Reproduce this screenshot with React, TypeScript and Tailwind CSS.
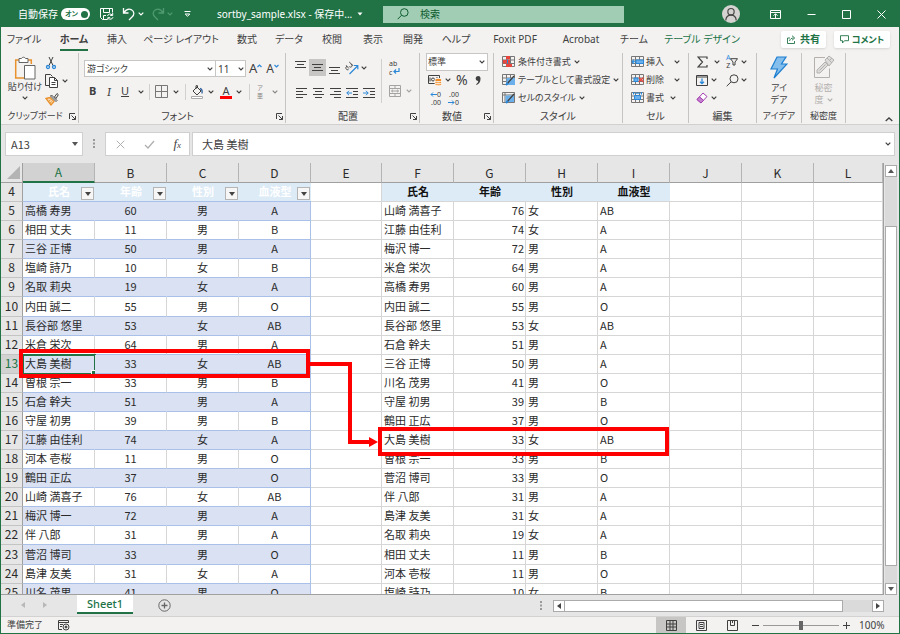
import React from 'react';
import clsx from 'clsx';

type Person = [name: string, age: number, sex: string, blood: string];

const COLUMNS = ['A', 'B', 'C', 'D', 'E', 'F', 'G', 'H', 'I', 'J', 'K', 'L'];
const HEADINGS = ['氏名', '年齢', '性別', '血液型'];

const SOURCE: Person[] = [
  ['高橋 寿男', 60, '男', 'A'],
  ['相田 丈夫', 11, '男', 'B'],
  ['三谷 正博', 50, '男', 'A'],
  ['塩崎 詩乃', 10, '女', 'B'],
  ['名取 莉央', 19, '女', 'A'],
  ['内田 誠二', 55, '男', 'O'],
  ['長谷部 悠里', 53, '女', 'AB'],
  ['米倉 栄次', 64, '男', 'A'],
  ['大島 美樹', 33, '女', 'AB'],
  ['曽根 宗一', 33, '男', 'B'],
  ['石倉 幹夫', 51, '男', 'A'],
  ['守屋 初男', 39, '男', 'B'],
  ['江藤 由佳利', 74, '女', 'A'],
  ['河本 壱桜', 11, '男', 'O'],
  ['鶴田 正広', 37, '男', 'O'],
  ['山崎 満喜子', 76, '女', 'AB'],
  ['梅沢 博一', 72, '男', 'A'],
  ['伴 八郎', 31, '男', 'A'],
  ['菅沼 博司', 33, '男', 'O'],
  ['島津 友美', 31, '女', 'A'],
  ['川名 茂男', 41, '男', 'O'],
];

const SORTED: Person[] = [
  ['山崎 満喜子', 76, '女', 'AB'],
  ['江藤 由佳利', 74, '女', 'A'],
  ['梅沢 博一', 72, '男', 'A'],
  ['米倉 栄次', 64, '男', 'A'],
  ['高橋 寿男', 60, '男', 'A'],
  ['内田 誠二', 55, '男', 'O'],
  ['長谷部 悠里', 53, '女', 'AB'],
  ['石倉 幹夫', 51, '男', 'A'],
  ['三谷 正博', 50, '男', 'A'],
  ['川名 茂男', 41, '男', 'O'],
  ['守屋 初男', 39, '男', 'B'],
  ['鶴田 正広', 37, '男', 'O'],
  ['大島 美樹', 33, '女', 'AB'],
  ['曽根 宗一', 33, '男', 'B'],
  ['菅沼 博司', 33, '男', 'O'],
  ['伴 八郎', 31, '男', 'A'],
  ['島津 友美', 31, '女', 'A'],
  ['名取 莉央', 19, '女', 'A'],
  ['相田 丈夫', 11, '男', 'B'],
  ['河本 壱桜', 11, '男', 'O'],
  ['塩崎 詩乃', 10, '女', 'B'],
];

const TABS = [
  { label: 'ファイル', width: 'w-[42px]' },
  { label: 'ホーム', width: 'w-[58px]', active: true },
  { label: '挿入', width: 'w-[28px]' },
  { label: 'ページ レイアウト', width: 'w-[100px]' },
  { label: '数式', width: 'w-[32px]' },
  { label: 'データ', width: 'w-[52px]' },
  { label: '校閲', width: 'w-[34px]' },
  { label: '表示', width: 'w-[48px]' },
  { label: '開発', width: 'w-[32px]' },
  { label: 'ヘルプ', width: 'w-[54px]' },
  { label: 'Foxit PDF', width: 'w-[64px]' },
  { label: 'Acrobat', width: 'w-[68px]' },
  { label: 'チーム', width: 'w-[38px]' },
  { label: 'テーブル デザイン', width: 'w-[98px]', context: true },
];

interface IconProps {
  children: React.ReactNode;
  className?: string;
  box?: string;
}

const Icon: React.FC<IconProps> = ({ children, className = 'w-[14px] h-[14px]', box = '0 0 14 14' }) => (
  <svg viewBox={box} className={clsx('shrink-0', className)} fill="none" stroke="currentColor" aria-hidden="true">
    {children}
  </svg>
);

const Chevron: React.FC<{ className?: string }> = ({ className }) => (
  <svg viewBox="0 0 6 4" className={clsx('w-[6px] h-[4px] shrink-0', className)} fill="none" stroke="currentColor" strokeWidth="1.2" aria-hidden="true">
    <path d="M.7.7 3 3 5.3.7" />
  </svg>
);

const Tool: React.FC<{ label: string; className?: string; children: React.ReactNode }> = ({ label, className, children }) => (
  <button type="button" aria-label={label} className={clsx('flex shrink-0 items-center whitespace-nowrap', className)}>
    {children}
  </button>
);

const Group: React.FC<{ label: string; width: string; small?: boolean; launcher?: boolean; children: React.ReactNode }> = ({ label, width, small, launcher, children }) => (
  <section aria-label={label} className={clsx('flex h-[70px] shrink-0 flex-col border-r border-[#c6c4c2]', width)}>
    <div className="h-[56px]">{children}</div>
    <div className="flex h-[14px] items-center">
      <span className={clsx('flex-1 whitespace-nowrap text-center leading-[14px]', small ? 'text-[9px]' : 'text-[10px]')}>{label}</span>
      {launcher && (
        <Tool label={`${label}の設定`} className="mr-[2px]">
          <Icon className="h-[7px] w-[7px]" box="0 0 7 7">
            <path d="M.5 6V.5H6M2.5 2.5l4 4M6.5 3v3.5H3" />
          </Icon>
        </Tool>
      )}
    </div>
  </section>
);

/* horizontal strokes of the alignment icons: [x, width] per line */
const Lines: React.FC<{ rows: [number, number][]; gap?: number; top?: number }> = ({ rows, gap = 3, top = 1 }) => (
  <Icon className="h-[12px] w-[12px]" box="0 0 12 12">
    {rows.map(([x, w], i) => (
      <path key={i} d={`M${x} ${top + i * gap + 0.5}h${w}`} />
    ))}
  </Icon>
);

const TitleBar = () => (
  <header className="flex h-[26px] shrink-0 items-center bg-[#217346] text-white">
    <div className="flex w-[382px] shrink-0 items-center">
      <label className="ml-[17px] flex items-center gap-[5px] text-[10px]">
        <span className="w-[38px] whitespace-nowrap">自動保存</span>
        <input type="checkbox" role="switch" defaultChecked className="sr-only" />
        <span className="flex h-[12px] w-[29px] items-center justify-between whitespace-nowrap rounded-full bg-white pl-[4px] pr-[2px] text-[7px] font-bold leading-[12px] text-[#217346]">
          オン
          <span className="h-[7px] w-[7px] shrink-0 rounded-full bg-[#217346]" />
        </span>
      </label>
      <Tool label="上書き保存" className="ml-[10px]">
        <Icon>
          <path d="M7 12.5H2.5l-2-2V1.500h12v4M3.500 1.500v4h6v-4M3.500 12.500v-4h2.500M7.500 9a2.700 2.700 0 0 1 4.700-1M12.700 6v2.500h-2.500M13 10.200a2.700 2.700 0 0 1-4.700 1M7.800 13v-2.300h2.400" />
        </Icon>
      </Tool>
      <Tool label="元に戻す" className="ml-[8px] gap-[2px]">
        <Icon>
          <path strokeWidth="1.300" d="M1.500 1v5h5M1.500 6C4 2.500 7 1.500 9.500 2.800c3 1.700 3 5.200.5 7.200l-3 3" />
        </Icon>
        <Chevron />
      </Tool>
      <Tool label="やり直し" className="ml-[7px] gap-[2px] text-[#4f9a70]">
        <Icon>
          <path strokeWidth="1.300" d="M12.500 1v5h-5M12.500 6C10 2.500 7 1.500 4.500 2.800c-3 1.700-3 5.200-.5 7.200l3 3" />
        </Icon>
        <Chevron />
      </Tool>
      <Tool label="ツール バーのカスタマイズ" className="ml-[11px]">
        <Icon className="h-[6px] w-[7px]" box="0 0 7 6">
          <path d="M.5.5h6M1.200 3h4.600L3.500 5.300z" />
        </Icon>
      </Tool>
      <h1 className="ml-[26px] w-[136px] whitespace-nowrap text-[10px]">sortby_sample.xlsx - 保存中...</h1>
      <Icon className="ml-[4px] h-[4px] w-[6px]" box="0 0 6 4">
        <path d="M.5.5h5L3 3.500z" fill="currentColor" stroke="none" />
      </Icon>
    </div>
    <div className="flex h-[17px] w-[241px] items-center bg-[#a0cdb4] text-[#0e5c2f]">
      <Icon className="ml-[14px] h-[12px] w-[12px]" box="0 0 12 12">
        <circle cx="7.300" cy="4.500" r="3.800" />
        <path d="M4.500 7.300.7 11.200" />
      </Icon>
      <input aria-label="検索" placeholder="検索" className="ml-[11px] w-full bg-transparent text-[10px] outline-none placeholder:text-[#0e5c2f]" />
    </div>
    <div className="ml-auto flex items-center pr-[13px]">
      <Tool label="アカウント" className="mr-[30px] h-[18px] w-[18px] justify-center rounded-full bg-[#d5d3d1] text-[#444]">
        <Icon className="h-[14px] w-[14px]" box="0 0 12 12">
          <circle cx="6" cy="4" r="2.700" />
          <path d="M1.500 11.500C1.700 8.500 3.500 6.900 6 6.900s4.300 1.600 4.500 4.600" />
        </Icon>
      </Tool>
      <Tool label="リボンの表示オプション" className="mr-[26px]">
        <Icon className="h-[9px] w-[11px]" box="0 0 11 9">
          <path d="M.5.500h10v8H.5zM.5 2.500h10M5.500 8V4M3.500 5.700l2-2 2 2" />
        </Icon>
      </Tool>
      <Tool label="最小化" className="mr-[26px]">
        <Icon className="h-[9px] w-[9px]" box="0 0 9 9"><path d="M.5 4.500h8" /></Icon>
      </Tool>
      <Tool label="最大化" className="mr-[26px]">
        <Icon className="h-[9px] w-[9px]" box="0 0 9 9"><path d="M.5.500h8v8h-8z" /></Icon>
      </Tool>
      <Tool label="閉じる">
        <Icon className="h-[9px] w-[9px]" box="0 0 9 9"><path d="m.5.500 8 8m0-8-8 8" /></Icon>
      </Tool>
    </div>
  </header>
);

const TabBar = () => (
  <nav className="flex h-[25px] shrink-0 items-center pl-[2px] text-[10px]">
    {TABS.map((tab) => (
      <button
        key={tab.label}
        type="button"
        className={clsx(
          'flex h-[22px] shrink-0 items-center justify-center whitespace-nowrap',
          tab.width,
          tab.active && 'font-bold',
          tab.context && 'text-[#217346]',
        )}
      >
        <span className={clsx('flex h-[22px] items-center border-y-2 border-transparent', tab.active && 'border-b-[#217346]')}>{tab.label}</span>
      </button>
    ))}
    <div className="ml-auto flex gap-[8px] pr-[9px] font-bold text-[#217346]">
      <button type="button" className="flex h-[17px] w-[45px] items-center justify-center gap-[4px] rounded-xs bg-white shadow-sm">
        <Icon className="h-[9px] w-[9px]" box="0 0 9 9">
          <path strokeWidth=".9" d="M3 3H.5v5.500h7V6M2.500 6C3 4 4.500 3 6.500 3M5 .7 7.700 3 5 5.300" />
        </Icon>
        共有
      </button>
      <button type="button" className="flex h-[17px] w-[56px] items-center justify-center gap-[3px] whitespace-nowrap rounded-xs bg-white text-[9px] shadow-sm">
        <Icon className="h-[9px] w-[9px]" box="0 0 9 9">
          <path strokeWidth=".9" d="M.5.700h8v5h-4L2.500 8V5.700h-2z" />
        </Icon>
        コメント
      </button>
    </div>
  </nav>
);

const ClipboardGroup = () => (
  <Group label="クリップボード" width="w-[78px]" small launcher>
    <div className="flex">
      <Tool label="貼り付け" className="w-[44px] flex-col pl-[4px] pt-[3px] text-[9px] leading-[14px]">
        <Icon className="h-[24px] w-[22px]" box="0 0 22 24">
          <path stroke="#e8912d" strokeWidth="1.500" d="M5 4H1.700v18H10M14 4h3.300v4" />
          <path stroke="#666" fill="#fff" d="M5 6.500v-4h2.500a2.200 2.200 0 0 1 4 0H14v4zM10.500 9.500h10.500v13.500H10.500z" />
        </Icon>
        <span>貼り付け</span>
        <Chevron className="mt-[2px]" />
      </Tool>
      <div className="flex flex-col gap-[4px] pt-[3px]">
        <Tool label="切り取り">
          <Icon>
            <path d="m4 1 4 8.500M8 1 4 9.500" />
            <circle cx="3" cy="11" r="1.500" stroke="#2b88d8" strokeWidth="1.300" />
            <circle cx="9" cy="11" r="1.500" stroke="#2b88d8" strokeWidth="1.300" />
          </Icon>
        </Tool>
        <Tool label="コピー" className="gap-[3px]">
          <Icon>
            <path d="M4.500 11.500h-4V.5h5l2 2" />
            <path fill="#fff" d="M4.500 3.500h5l3 3v7h-8zM9.500 3.500v3h3M6.500 8.500h4M6.500 10.500h4" />
          </Icon>
          <Chevron />
        </Tool>
        <Tool label="書式のコピー">
          <Icon>
            <path fill="#fbd9ae" stroke="#e8912d" strokeWidth="1.300" d="M1 6.500 5 5.500l4 4L6 13z" />
            <path stroke="#e8912d" d="m3.500 9.500 2-1.500M5 11.500l1.500-2" />
            <path fill="#fff" d="M5.500 4 11 9.500l1-1L6.500 3zM9.500 5 12 1.500l1.300 1.200L11 6.500z" />
          </Icon>
        </Tool>
      </div>
    </div>
  </Group>
);

const Divider = ({ className }: { className?: string }) => <span className={clsx('w-px shrink-0 bg-[#d2d0ce]', className)} />;

const FontGroup = () => (
  <Group label="フォント" width="w-[207px]" launcher>
    <div className="flex h-[17px] items-center pl-[5px] mt-[7px]">
      <span className="relative flex items-center">
        <select aria-label="フォント名" className="h-[17px] w-[132px] appearance-none border border-[#c8c6c4] bg-white pl-[2px] text-[9px] leading-[14px]">
          <option>游ゴシック</option>
        </select>
        <Chevron className="absolute right-[3px]" />
      </span>
      <span className="relative -ml-px flex items-center">
        <select aria-label="フォント サイズ" className="h-[17px] w-[31px] appearance-none border border-[#c8c6c4] bg-white pl-[2px] text-[10px] leading-[14px]">
          <option>11</option>
        </select>
        <Chevron className="absolute right-[2px]" />
      </span>
      <Tool label="フォント サイズの拡大" className="ml-[3px] text-[13px]">
        A<Icon className="mb-[6px] h-[4px] w-[5px]" box="0 0 5 4"><path stroke="#2b88d8" strokeWidth="1.200" d="M.5 3 2.500 1l2 2" /></Icon>
      </Tool>
      <Tool label="フォント サイズの縮小" className="ml-[4px] text-[12px]">
        A<Icon className="mb-[6px] h-[4px] w-[5px]" box="0 0 5 4"><path stroke="#2b88d8" strokeWidth="1.200" d="m.5 1 2 2 2-2" /></Icon>
      </Tool>
    </div>
    <div className="mt-[6px] flex h-[17px] items-center pl-[10px]">
      <Tool label="太字" className="w-[17px] text-[11px] font-bold">B</Tool>
      <Tool label="斜体" className="w-[15px] pl-[1px] font-serif text-[12px] italic">I</Tool>
      <Tool label="下線" className="w-[23px] justify-between text-[11px]"><span className="underline">U</span><Chevron /></Tool>
      <Divider className="ml-[5px] h-[16px]" />
      <Tool label="罫線" className="ml-[5px] gap-[5px]">
        <Icon className="h-[13px] w-[13px]" box="0 0 13 13"><path stroke="#777" d="M.5.500h12v12H.5zM6.500 0v13M0 6.500h13" /></Icon>
        <Chevron />
      </Tool>
      <Divider className="ml-[6px] h-[16px]" />
      <Tool label="塗りつぶしの色" className="ml-[5px] gap-[4px]">
        <Icon className="h-[14px] w-[13px]" box="0 0 13 14">
          <path d="m2 6 4-4 4 4-4 4zM5 4V.7h1.500V3" />
          <path stroke="#2b5f9e" strokeWidth="1.300" d="M9 3.500c2 .5 2.500 2 2 5" />
          <path stroke="#aaa" d="M.5 11.500h11v2H.5z" fill="#fff" />
        </Icon>
        <Chevron />
      </Tool>
      <Tool label="フォントの色" className="ml-[6px] gap-[4px]">
        <span className="flex h-[14px] w-[12px] flex-col items-center border-b-[3px] border-[#f00] text-[11px] leading-[12px]">A</span>
        <Chevron />
      </Tool>
      <Divider className="ml-[7px] h-[16px]" />
      <Tool label="ふりがなの表示" className="ml-[7px] gap-[9px] text-[#8a8886]">
        <span className="flex flex-col text-[6px] leading-[8px]"><span>ア</span><span>亜</span></span>
        <Chevron />
      </Tool>
    </div>
  </Group>
);

const AlignGroup = () => (
  <Group label="配置" width="w-[134px]" launcher>
    <div className="flex pt-[6px]">
      <div className="flex w-[87px] flex-col gap-[8px] pl-[7px]">
        <div className="flex h-[17px] items-center">
          <Tool label="上揃え" className="w-[16px] justify-center pb-[3px]"><Lines rows={[[0, 11], [2, 7], [0, 11]]} /></Tool>
          <Tool label="上下中央揃え" className="h-[17px] w-[17px] justify-center bg-[#c8c6c4]"><Lines rows={[[0, 11], [2, 7], [0, 11]]} top={2} /></Tool>
          <Tool label="下揃え" className="w-[17px] justify-center pt-[4px]"><Lines rows={[[0, 11], [2, 7], [0, 11]]} top={3} /></Tool>
          <Tool label="方向" className="ml-[2px] gap-[2px]">
            <Icon>
              <path strokeWidth=".9" d="M4.200 1 8 4.500M5.800 3.200a1.500 1.500 0 1 1-1.600 2.200M1.200 4.300l2.600 3.200M2 5.200a1.500 1.500 0 1 0 1.500 3.500" />
              <path stroke="#2b88d8" strokeWidth="1.200" d="m4.500 13 8-8M8.800 4.500h4V8.300" />
            </Icon>
            <Chevron />
          </Tool>
        </div>
        <div className="flex h-[17px] items-center">
          <Tool label="左揃え" className="w-[17px] justify-center"><Lines rows={[[0, 11], [0, 7], [0, 11], [0, 7]]} /></Tool>
          <Tool label="中央揃え" className="w-[17px] justify-center"><Lines rows={[[0, 11], [2, 7], [0, 11], [2, 7]]} /></Tool>
          <Tool label="右揃え" className="w-[17px] justify-center"><Lines rows={[[0, 11], [4, 7], [0, 11], [4, 7]]} /></Tool>
          <Tool label="インデントを減らす" className="ml-[2px] w-[17px]">
            <Icon className="h-[12px] w-[12px]" box="0 0 12 12">
              <path d="M0 1.500h12M7 4.500h5M7 7.500h5M0 10.500h12" />
              <path stroke="#2b88d8" d="M6 6H.800M3 3.800.8 6 3 8.200" />
            </Icon>
          </Tool>
          <Tool label="インデントを増やす">
            <Icon className="h-[12px] w-[12px]" box="0 0 12 12">
              <path d="M0 1.500h12M7 4.500h5M7 7.500h5M0 10.500h12" />
              <path stroke="#2b88d8" d="M0 6h5.200M3 3.800 5.200 6 3 8.200" />
            </Icon>
          </Tool>
        </div>
      </div>
      <Divider className="ml-[8px] h-[44px]" />
      <div className="flex flex-col gap-[9px] pl-[7px]">
        <Tool label="折り返して全体を表示する" className="h-[17px]">
          <span className="flex flex-col text-left text-[7px] leading-[9px]"><span>ab</span><span>c</span></span>
          <Icon className="-ml-[4px] mt-[7px] h-[7px] w-[7px]" box="0 0 7 7"><path stroke="#2b88d8" strokeWidth="1.200" d="M6 0v3.500H1M3 1.500l-2 2 2 2" /></Icon>
        </Tool>
        <Tool label="セルを結合して中央揃え" className="gap-[5px] text-[#a5a3a1]">
          <Icon className="h-[12px] w-[12px]" box="0 0 12 12"><path d="M.5.500h11v11H.5zM0 3.500h12M0 8.500h12M6 0v3.500M6 8.500V12M2.500 6h7M4 4.700 2.500 6 4 7.300M8 4.700 9.500 6 8 7.300" /></Icon>
          <Chevron />
        </Tool>
      </div>
    </div>
  </Group>
);

const NumberGroup = () => (
  <Group label="数値" width="w-[74px]" launcher>
    <span className="relative ml-[6px] flex w-[62px] items-center">
      <select aria-label="表示形式" className="h-[18px] w-full appearance-none border border-[#c8c6c4] bg-white pl-[1px] text-[9px] leading-[14px]">
        <option>標準</option>
      </select>
      <Chevron className="absolute right-[3px]" />
    </span>
    <div className="mt-[1px] flex h-[16px] items-center pl-[8px]">
      <Tool label="通貨表示形式" className="gap-[3px]">
        <Icon className="h-[12px] w-[14px]" box="0 0 14 12">
          <path d="M7 9.500H.5v-8h11V4" /><circle cx="5" cy="5.500" r="1.500" /><path d="M2 3.500v4M9 3v1" />
          <path stroke="#fff" strokeWidth=".7" fill="#f08a24" d="M7 5.500c0-1.500 6.500-1.500 6.500 0v5c0 1.500-6.500 1.500-6.500 0zM7 7.200c1 1 5.500 1 6.500 0M7 9.200c1 1 5.500 1 6.500 0" />
        </Icon>
        <Chevron />
      </Tool>
      <Tool label="パーセント スタイル" className="ml-[5px] text-[14px] leading-[16px]">%</Tool>
      <Tool label="桁区切りスタイル" className="ml-[7px]">
        <Icon className="h-[9px] w-[6px]" box="0 0 6 9"><path fill="currentColor" stroke="none" d="M3 0a2.500 2.500 0 0 1 2.500 2.800C5.500 6 4 8 1.500 9l-.4-.8C2.500 7.300 3.200 6.300 3.200 5A2.500 2.500 0 1 1 3 0z" /></Icon>
      </Tool>
    </div>
    <div className="mt-px flex h-[19px] items-center gap-[4px] pl-[7px]">
      {['小数点以下の表示桁数を増やす', '小数点以下の表示桁数を減らす'].map((label, i) => (
        <Tool key={label} label={label} className="w-[14px] flex-col text-[7px] leading-[8px]">
          <span className="flex w-full items-center justify-end">
            {i === 0 && <Icon className="h-[5px] w-[7px]" box="0 0 7 5"><path stroke="#2b88d8" d="M7 2.500H1M3 .5l-2 2 2 2" /></Icon>}
            {i === 0 ? '0' : '.00'}
          </span>
          <span className="flex w-full items-center justify-end">
            {i === 1 && <Icon className="h-[5px] w-[7px]" box="0 0 7 5"><path stroke="#2b88d8" d="M0 2.500h6M4 .5l2 2-2 2" /></Icon>}
            {i === 0 ? '.00' : '0'}
          </span>
        </Tool>
      ))}
    </div>
  </Group>
);

const SheetGrid = () => <path stroke="#777" d="M.5.500h12v10H.5zM0 4h13M0 7.500h13M4.500 0v11M8.500 0v11" />;

const StyleGroup = () => (
  <Group label="スタイル" width="w-[129px]">
    <div className="flex flex-col pl-[8px] text-[9px] leading-[18px]">
      <Tool label="条件付き書式" className="gap-[3px]">
        <Icon className="h-[12px] w-[13px]" box="0 0 13 12">
          <SheetGrid />
          <path fill="#e8453c" stroke="none" d="M4 0h4v3.500H4zM1 4h7v3.500H1zM4 8h6v3H4z" /><path stroke="#2b88d8" d="M5.500 3.500v4" />
        </Icon>
        条件付き書式<Chevron />
      </Tool>
      <Tool label="テーブルとして書式設定" className="gap-[3px]">
        <Icon className="h-[12px] w-[13px]" box="0 0 13 12">
          <SheetGrid />
          <path fill="#6bb0ea" stroke="none" d="M4.500 4H13v7H4.500z" /><path strokeWidth="1.300" d="m5 10 7-8" /><path stroke="#2b88d8" strokeWidth="2" d="m4 11 2-2" />
        </Icon>
        テーブルとして書式設定<Chevron />
      </Tool>
      <Tool label="セルのスタイル" className="gap-[3px]">
        <Icon className="h-[12px] w-[13px]" box="0 0 13 12">
          <path stroke="#777" d="M.5.500h12v10H.5zM0 3h13M3 0v11" />
          <path fill="#6bb0ea" stroke="none" d="M3.500 3.500H12v6.500H3.500z" /><path strokeWidth="1.300" d="m5 10 7-8" /><path stroke="#2b88d8" strokeWidth="2" d="m4 11 2-2" />
        </Icon>
        セルのスタイル<Chevron />
      </Tool>
    </div>
  </Group>
);

const CellGroup = () => (
  <Group label="セル" width="w-[66px]">
    <div className="flex flex-col items-start pl-[8px] text-[9px] leading-[18px]">
      <Tool label="挿入" className="gap-[2px]">
        <Icon className="h-[12px] w-[13px]" box="0 0 13 12"><SheetGrid /><path fill="#6bb0ea" stroke="#2b88d8" d="M5 4h7.500v3.500H5zM5 5.700H.800M3 3.500.8 5.700 3 8" /></Icon>
        <span className="w-[26px] text-left">挿入</span><Chevron />
      </Tool>
      <Tool label="削除" className="gap-[2px]">
        <Icon className="h-[12px] w-[13px]" box="0 0 13 12"><SheetGrid /><path fill="#6bb0ea" stroke="#2b88d8" d="M3 4h4v3.500H3z" /><path stroke="#e8453c" strokeWidth="1.300" d="m8 3.500 4.500 4.500m0-4.500L8 8" /></Icon>
        <span className="w-[26px] text-left">削除</span><Chevron />
      </Tool>
      <Tool label="書式" className="gap-[2px]">
        <Icon className="h-[12px] w-[13px]" box="0 0 13 12"><SheetGrid /><path fill="#6bb0ea" stroke="#2b88d8" d="M3.500 3.500h6v4h-6zM3.500 1.200h6M2.500 0v2.500M10.500 0v2.500" /></Icon>
        <span className="w-[22px] text-left">書式</span><Chevron />
      </Tool>
    </div>
  </Group>
);

const EditGroup = () => (
  <Group label="編集" width="w-[68px]">
    <div className="grid grid-cols-[30px_30px] pl-[7px]">
      <Tool label="合計" className="h-[18px] gap-[6px]">
        <Icon className="ml-px h-[12px] w-[11px]" box="0 0 11 12"><path strokeWidth="1.200" d="M10 3V1H1l4.500 5L1 11h9V9" /></Icon>
        <Chevron />
      </Tool>
      <Tool label="並べ替えとフィルター" className="h-[18px] gap-[3px]">
        <span className="flex flex-col text-[7px] leading-[8px]"><span className="text-[#2b88d8]">A</span><span>Z</span></span>
        <Icon className="-ml-[3px] h-[8px] w-[8px]" box="0 0 8 8"><path d="M.5.700h7L5 4v3H3V4z" /></Icon>
        <Chevron />
      </Tool>
      <Tool label="フィル" className="h-[18px] gap-[3px]">
        <Icon className="h-[11px] w-[12px]" box="0 0 12 11"><path d="M.5.500h11v10H.5zM0 2h12" /><path stroke="#2b88d8" strokeWidth="1.300" d="M6 3.500v5M4 6.700l2 2 2-2" /></Icon>
        <Chevron />
      </Tool>
      <Tool label="検索と選択" className="h-[18px] gap-[2px]">
        <Icon className="h-[13px] w-[13px]" box="0 0 13 13"><circle cx="8" cy="4.800" r="4" /><path d="M5 8 .7 12.200" /></Icon>
        <Chevron />
      </Tool>
      <Tool label="クリア" className="h-[18px] gap-[3px]">
        <Icon className="h-[12px] w-[12px]" box="0 0 12 12"><path fill="#fff" stroke="#a33fb0" d="m1 7.500 6-6.500 4 3.500-6 6.500z" /><path fill="#c583cf" stroke="#a33fb0" d="m1 7.500 2.500-2.700 4 3.500L5 11z" /></Icon>
        <Chevron />
      </Tool>
    </div>
  </Group>
);

const Ribbon = () => (
  <div className="flex h-[73px] shrink-0 items-start border-b border-[#d2d0ce] pt-px">
    <ClipboardGroup />
    <FontGroup />
    <AlignGroup />
    <NumberGroup />
    <StyleGroup />
    <CellGroup />
    <EditGroup />
    <Group label="アイデア" width="w-[45px]" small>
      <Tool label="アイデア" className="w-full flex-col pt-[3px] text-[9px] leading-[12px]">
        <Icon className="mb-[3px] h-[23px] w-[18px]" box="0 0 18 23"><path fill="#83beec" stroke="#1e7fd0" strokeWidth="1.200" d="M7 1h9l-4.500 7H17L4 22l3.500-9H1z" /></Icon>
        <span>アイ</span><span>デア</span>
      </Tool>
    </Group>
    <Group label="秘密度" width="w-[44px]" small>
      <Tool label="秘密度" className="w-full flex-col pt-[2px] text-[9px] leading-[12px] text-[#b3b0ad]">
        <Icon className="mb-[3px] h-[24px] w-[22px]" box="0 0 22 24">
          <path d="M12 2.500H1.500v20h15v-9" />
          <path fill="#dedcda" d="m4 15 8-8 3 3-8 8H4zM6.500 15.500l6-6M12 5l4-4 5 4-5 6zM14 3l5 5M16 6l3-3" />
        </Icon>
        <span>秘密</span><span className="flex items-center gap-[3px]">度<Chevron /></span>
      </Tool>
    </Group>
    <Tool label="リボンを折りたたむ" className="ml-auto mr-[6px] mt-[64px]">
      <Icon className="h-[5px] w-[8px]" box="0 0 8 5"><path strokeWidth="1.300" d="m.7 4 3.300-3 3.300 3" /></Icon>
    </Tool>
  </div>
);

const FormulaBar = () => (
  <div className="flex h-[38px] shrink-0 items-start bg-[#e6e6e6] px-[4px] pt-[7px] font-['Noto_Sans_CJK_JP',sans-serif]">
    <span className="relative flex items-center">
      <input aria-label="名前ボックス" defaultValue="A13" className="h-[24px] w-[78px] border border-[#cfcfcf] bg-white pl-[5px] text-[11px]" />
      <Icon className="absolute right-[5px] h-[4px] w-[6px]" box="0 0 6 4"><path fill="#555" stroke="none" d="M0 0h6L3 4z" /></Icon>
    </span>
    <Icon className="mx-[10px] mt-[7px] h-[9px] w-[2px]" box="0 0 2 9">
      <path fill="#999" stroke="none" d="M0 0h2v2H0zM0 3.500h2v2H0zM0 7h2v2H0z" />
    </Icon>
    <div className="flex h-[24px] w-[85px] items-center justify-between border border-[#cfcfcf] bg-white px-[8px] text-[#b0b0b0]">
      <Tool label="キャンセル"><Icon className="ml-[2px] h-[9px] w-[9px]" box="0 0 9 9"><path d="m.7.700 7.600 7.600m0-7.600L.7 8.300" /></Icon></Tool>
      <Tool label="入力"><Icon className="h-[9px] w-[11px]" box="0 0 11 9"><path strokeWidth="1.300" d="m1 5 3 3 6-7" /></Icon></Tool>
      <Tool label="関数の挿入" className="font-['Liberation_Serif',serif] text-[13px] italic text-[#444]">f<span className="mt-[4px] text-[9px]">x</span></Tool>
    </div>
    <span className="relative ml-[2px] flex flex-1 items-center">
      <input aria-label="数式バー" defaultValue="大島 美樹" className="h-[24px] w-full border border-[#cfcfcf] bg-white pl-[9px] text-[11px]" />
      <Chevron className="absolute right-[4px]" />
    </span>
  </div>
);

const FilterButton = ({ label }: { label: string }) => (
  <button type="button" aria-label={`${label}のフィルター`} className="absolute bottom-px right-px flex h-[13px] w-[13px] items-center justify-center border border-[#b5b5b5] bg-[#f6f6f6]">
    <Icon className="h-[4px] w-[6px]" box="0 0 6 4"><path fill="#444" stroke="none" d="M0 0h6L3 4z" /></Icon>
  </button>
);

const GRID = 'border-b border-r border-[#d6d6d6]';

const RowHeader = ({ row }: { row: number }) => (
  <th scope="row" className={clsx('border-b border-b-[#c4c4c4] border-r border-r-[#a0a0a0] text-center text-[12px] font-normal', row === 13 ? 'bg-[#d2d2d2] text-[#217346]' : 'bg-[#e6e6e6]')}>
    {row}
  </th>
);

const DataRow = ({ row, left, right }: { row: number; left: Person; right: Person }) => {
  const banded = row % 2 === 1;
  return (
    <tr className="h-[19px]">
      <RowHeader row={row} />
      {left.map((value, i) => (
        <td
          key={i}
          className={clsx(
            'relative border-b border-r border-b-[#a9c0e8]',
            i === 0 ? 'pl-[2px]' : 'text-center',
            banded ? 'bg-[#d9e1f2]' : 'bg-white',
            i === 3 ? 'border-r-[#a9c0e8]' : banded ? 'border-r-[#d9e1f2]' : 'border-r-[#d6d6d6]',
            row === 13 && i === 0 && 'outline-2 -outline-offset-1 outline-[#217346]',
          )}
        >
          {value}
          {row === 13 && i === 0 && <span className="absolute -bottom-px -right-px h-[4px] w-[4px] border-l border-t border-white bg-[#217346]" />}
        </td>
      ))}
      <td className={GRID} />
      {right.map((value, i) => (
        <td key={i} className={clsx(GRID, 'bg-white', i === 1 ? 'pr-[1px] text-right' : 'pl-[2px]')}>{value}</td>
      ))}
      <td className={GRID} />
      <td className={GRID} />
      <td className={GRID} />
    </tr>
  );
};

const Sheet = () => (
  <main className="flex min-h-0 flex-1 bg-[#e6e6e6]">
    <div className="relative flex-1 overflow-hidden border-b border-[#a0a0a0]">
      <table className="h-[440px] w-full table-fixed border-separate border-spacing-0 whitespace-nowrap bg-white font-['Noto_Sans_CJK_JP',sans-serif] text-[11px] leading-[16px] text-[#2b2b2b] [&_tbody_td]:pb-[2px] [&_tbody_th]:pb-[2px]">
        <colgroup>
          <col className="w-[22px]" />
          {COLUMNS.slice(0, -1).map((c) => <col key={c} className={c === 'E' ? 'w-[71px]' : 'w-[72px]'} />)}
          <col />
        </colgroup>
        <thead>
          <tr className="h-[20px] text-[12px]">
            <th className="border-b border-r border-[#a0a0a0] bg-[#e6e6e6]">
              <Icon className="ml-auto mr-[2px] h-[13px] w-[13px]" box="0 0 13 13"><path fill="#b4b4b4" stroke="none" d="M13 0v13H0z" /></Icon>
            </th>
            {COLUMNS.map((c) => (
              <th
                key={c}
                scope="col"
                className={clsx(
                  'border-r border-r-[#b4b4b4] text-center font-normal',
                  c === 'A' ? 'border-b-2 border-b-[#217346] bg-[#d2d2d2] text-[#217346]' : 'border-b border-b-[#a0a0a0] bg-[#e6e6e6]',
                )}
              >
                {c}
              </th>
            ))}
          </tr>
        </thead>
        <tbody>
          <tr className="h-[19px]">
            <RowHeader row={4} />
            {HEADINGS.map((h) => (
              <td key={h} className="relative border-b border-[#a9c0e8] bg-[#ddebf7] text-center font-bold text-white">
                {h}
                <FilterButton label={h} />
              </td>
            ))}
            <td className={GRID} />
            {HEADINGS.map((h) => <td key={h} className="border-b border-[#d6d6d6] bg-[#ddebf7] text-center font-bold text-[#111]">{h}</td>)}
            <td className={GRID} />
            <td className={GRID} />
            <td className={GRID} />
          </tr>
          {SOURCE.map((person, i) => <DataRow key={i} row={i + 5} left={person} right={SORTED[i]} />)}
        </tbody>
      </table>
      {/* callout from the active record to its sorted position */}
      <svg className="pointer-events-none absolute left-0 top-0 h-[432px] w-[700px]" viewBox="0 0 700 432" fill="none" stroke="#f00" strokeWidth="4" aria-hidden="true">
        <path d="M20 188h287v25H20zM379 266h287v25H379zM309 201h40v78h20" />
        <path fill="#f00" stroke="none" d="m368 274 9 5-9 5z" />
      </svg>
    </div>
    <div className="flex w-[16px] flex-col border-l border-[#a0a0a0] bg-[#e6e6e6] pl-px pr-[3px] pt-[2px]" aria-label="垂直スクロール">
      <button type="button" aria-label="上へ" className="flex h-[12px] w-[12px] shrink-0 items-center justify-center border border-[#ababab] bg-white">
        <Icon className="h-[4px] w-[6px]" box="0 0 6 4"><path fill="#555" stroke="none" d="M0 4h6L3 0z" /></Icon>
      </button>
      <div className="flex w-[12px] flex-1 flex-col bg-[#dadada] pb-[17px] pt-[49px]">
        <div className="flex-1 border border-[#ababab] bg-white" />
      </div>
      <button type="button" aria-label="下へ" className="flex h-[12px] w-[12px] shrink-0 items-center justify-center border border-[#ababab] bg-white">
        <Icon className="h-[4px] w-[6px]" box="0 0 6 4"><path fill="#555" stroke="none" d="M0 0h6L3 4z" /></Icon>
      </button>
    </div>
  </main>
);

const Arrow = ({ flip }: { flip?: boolean }) => (
  <Icon className="h-[6px] w-[4px]" box="0 0 4 6">
    <path fill="currentColor" stroke="none" d={flip ? 'M0 0v6l4-3z' : 'M4 0v6L0 3z'} />
  </Icon>
);

const SheetTabs = () => (
  <div className="flex h-[21px] shrink-0 items-start bg-[#e6e6e6]">
    <div className="flex h-[19px] w-[76px] items-center gap-[18px] pl-[20px] text-[#b8b8b8]">
      <Tool label="前のシート"><Arrow /></Tool>
      <Tool label="次のシート"><Arrow flip /></Tool>
    </div>
    <button type="button" className="h-[19px] w-[56px] border-b-2 border-[#217346] bg-white text-[11px] font-medium leading-[17px] text-[#217346]">Sheet1</button>
    <Tool label="新しいシート" className="ml-[25px] mt-[4px] text-[#666]">
      <Icon className="h-[13px] w-[13px]" box="0 0 13 13"><circle cx="6.500" cy="6.500" r="5.700" /><path strokeWidth="1.300" d="M6.500 3.500v6M3.500 6.500h6" /></Icon>
    </Tool>
    <Icon className="ml-auto mt-[6px] h-[9px] w-[2px]" box="0 0 2 9">
      <path fill="#999" stroke="none" d="M0 0h2v2H0zM0 3.500h2v2H0zM0 7h2v2H0z" />
    </Icon>
    <div className="ml-[11px] mr-[15px] mt-[5px] flex h-[12px] w-[331px] bg-[#dadada] text-[#444]">
      <Tool label="左へ" className="w-[12px] justify-center border border-[#ababab] bg-white"><Arrow /></Tool>
      <div className="mr-[29px] flex-1 border border-l-0 border-[#ababab] bg-white" />
      <Tool label="右へ" className="w-[12px] justify-center border border-[#ababab] bg-white"><Arrow flip /></Tool>
    </div>
  </div>
);

const StatusBar = () => (
  <footer className="flex h-[17px] shrink-0 items-center border-t border-[#d2d2d2] bg-[#f3f2f1] text-[10px]">
    <span className="ml-[6px] w-[51px] text-[9px]">準備完了</span>
    <Tool label="マクロの記録">
      <Icon className="h-[11px] w-[12px]" box="0 0 12 11"><path d="M4 9.500H.5v-9h10V3M0 2.500h11M2 4.500h3M2 6.500h2" /><circle cx="8" cy="7" r="3" /><circle cx="8" cy="7" r="1" fill="currentColor" /></Icon>
    </Tool>
    <div className="ml-auto flex h-full items-center">
      <Tool label="標準" className="h-full w-[30px] justify-center bg-[#c8c6c4]">
        <Icon className="h-[11px] w-[11px]" box="0 0 11 11"><path d="M.5.500h10v10H.5zM0 4h11M0 7h11M4 0v11M7 0v11" /></Icon>
      </Tool>
      <Tool label="ページ レイアウト" className="w-[31px] justify-center">
        <Icon className="h-[11px] w-[11px]" box="0 0 11 11"><path d="M.5.500h10v10H.5zM3 2.500h5v6H3zM4 4.500h3M4 6.500h3" /></Icon>
      </Tool>
      <Tool label="改ページ プレビュー" className="w-[31px] justify-center">
        <Icon className="h-[11px] w-[11px]" box="0 0 11 11"><path d="M.5.500h10v10H.5zM3.500 0v5.500h4V0M5.500 0v3" /></Icon>
      </Tool>
      <Tool label="縮小" className="ml-[4px]"><Icon className="h-[7px] w-[7px]" box="0 0 7 7"><path d="M0 3.500h7" /></Icon></Tool>
      <input
        type="range"
        aria-label="ズーム"
        defaultValue={50}
        className="mx-[4px] h-px w-[76px] appearance-none bg-[#999] [&::-webkit-slider-thumb]:h-[9px] [&::-webkit-slider-thumb]:w-[4px] [&::-webkit-slider-thumb]:appearance-none [&::-webkit-slider-thumb]:bg-[#666]"
      />
      <Tool label="拡大"><Icon className="h-[7px] w-[7px]" box="0 0 7 7"><path d="M0 3.500h7M3.500 0v7" /></Icon></Tool>
      <span className="ml-[9px] w-[40px]">100%</span>
    </div>
  </footer>
);

export default function App() {
  return (
    <div className="flex h-screen flex-col overflow-hidden border border-[#217346] bg-[#f3f2f1] font-['Noto_Sans','Noto_Sans_CJK_JP',sans-serif] text-[#404040] [font-feature-settings:'palt']">
      <TitleBar />
      <TabBar />
      <Ribbon />
      <FormulaBar />
      <Sheet />
      <SheetTabs />
      <StatusBar />
    </div>
  );
}
